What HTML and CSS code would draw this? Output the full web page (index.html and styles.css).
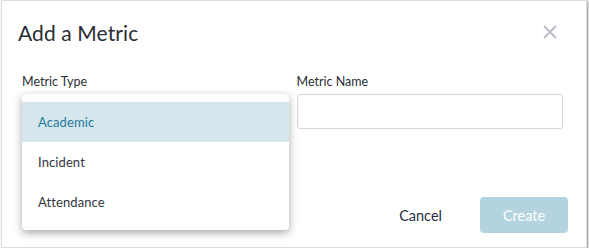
FILE: index.html
```html
<!DOCTYPE html>
<html>
<head>
<meta charset="utf-8">
<link rel="stylesheet" href="styles.css">
</head>
<body>
<div class="dialog">
  <div class="header">
    <h1 class="title">Add a Metric</h1>
    <button class="close" aria-label="Close">
      <svg width="16" height="16" viewBox="0 0 16 16"><path d="M2 2 L14 14 M14 2 L2 14" stroke="#b9bcc9" stroke-width="2" fill="none"/></svg>
    </button>
  </div>
  <div class="body">
    <div class="field">
      <label class="label">Metric Type</label>
      <div class="select-wrap">
        <div class="select"></div>
        <ul class="menu">
          <li class="item active">Academic</li>
          <li class="item">Incident</li>
          <li class="item">Attendance</li>
        </ul>
      </div>
    </div>
    <div class="field">
      <label class="label">Metric Name</label>
      <input class="input" type="text">
    </div>
  </div>
  <div class="footer">
    <button class="btn-cancel">Cancel</button>
    <button class="btn-create">Create</button>
  </div>
</div>
</body>
</html>
```
FILE: styles.css
```css
* { box-sizing: border-box; }
html, body { margin: 0; padding: 0; background: #fff; }
body { font-family: Lato, "Liberation Sans", sans-serif; color: #2c2f3a; }
.dialog {
  margin: 0 2px 0 1px;
  width: 586px;
  height: 248px;
  border: 1px solid #dcdcdc;
  box-shadow: 1px 1px 2px rgba(0,0,0,0.45);
  background: #fff;
  display: flex;
  flex-direction: column;
}
.header {
  display: flex;
  justify-content: space-between;
  align-items: center;
  padding: 16px 28px 0 16px;
  height: 46px;
}
.title { margin: 0; font-size: 21px; font-weight: 400; color: #2b2d33; letter-spacing: 0.1px; }
.close { border: 0; background: none; padding: 0; width: 16px; height: 16px; display: flex; }
.body {
  display: flex;
  gap: 8px;
  padding: 27px 23px 0 20px;
}
.field { flex: 1; display: flex; flex-direction: column; }
.label { font-size: 12.5px; color: #2a2d36; height: 17px; line-height: 16px; margin-bottom: 3px; }
.select-wrap { position: relative; height: 35px; }
.select { height: 35px; border: 1px solid #d5d3e0; border-radius: 3px; }
.menu {
  position: absolute; top: 0; left: 0; right: 0;
  margin: 0; padding: 8px 0; list-style: none;
  background: #fff; border-radius: 4px;
  box-shadow: 0 3px 8px rgba(0,0,0,0.35);
  z-index: 2;
}
.item { height: 40px; line-height: 40px; padding-left: 16px; font-size: 13px; color: #33363f; letter-spacing: 0.1px; }
.item.active { background: #d6e6ed; color: #1f7b9c; }
.input { height: 35px; border: 1px solid #d5d3e0; border-radius: 3px; outline: none; }
.footer {
  margin-top: auto;
  display: flex; justify-content: flex-end; align-items: center;
  gap: 38px;
  padding: 0 18px 14px 0;
}
.btn-cancel { border: 0; background: none; font: inherit; font-size: 14.5px; color: #2b2f45; padding: 0; }
.btn-create {
  border: 0; border-radius: 4px; background: #b3d4de; color: #fff;
  font: inherit; font-size: 14.5px; width: 88px; height: 36px;
}
```
